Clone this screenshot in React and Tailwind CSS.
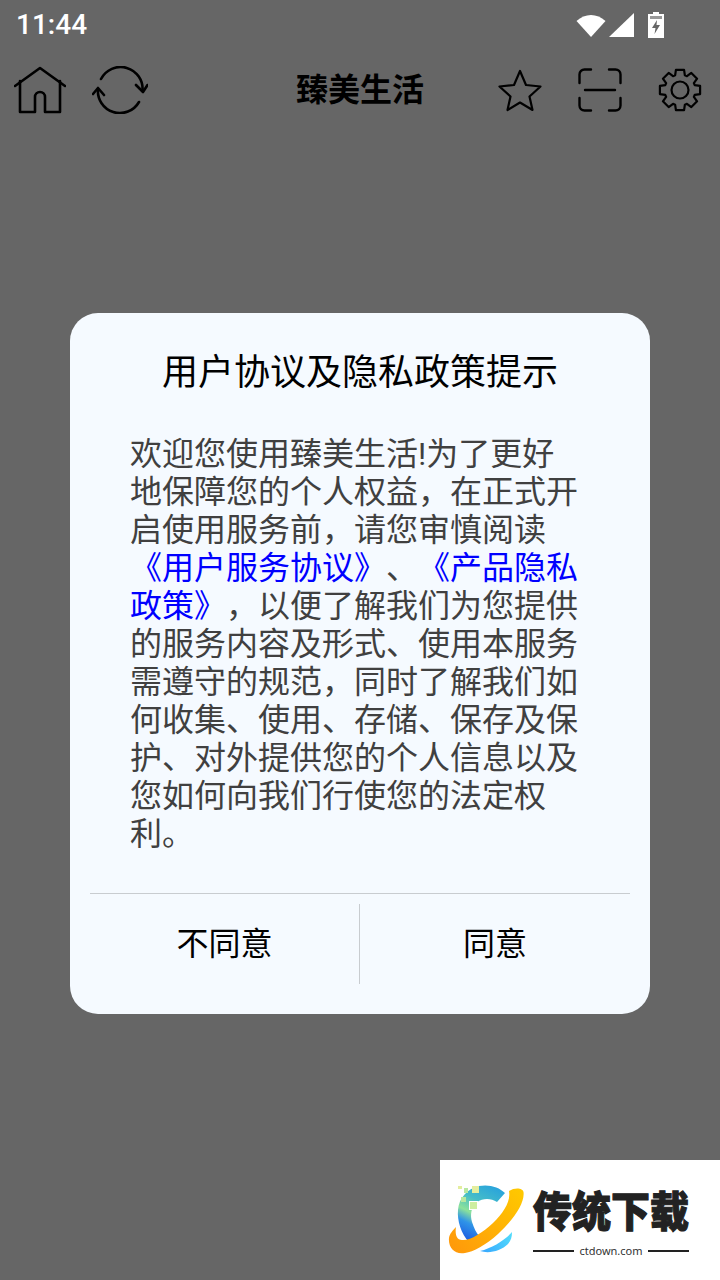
const cjk = { fontFamily: 'Roboto, "Noto Sans CJK SC", "Noto Sans", sans-serif' };

function Home() {
  return (
    <svg width="52" height="48" viewBox="0 0 52 48" fill="none" stroke="#000" strokeWidth="2.6" strokeLinecap="round" strokeLinejoin="round">
      <path d="M1 20 L26 2 L51 20" />
      <path d="M6 15 V46 H21 V31 A5 5 0 0 1 31 31 V46 H46 V15" />
    </svg>
  );
}
function Refresh() {
  return (
    <svg width="56" height="48" viewBox="0 0 56 48" fill="none" stroke="#000" strokeWidth="2.6" strokeLinecap="round" strokeLinejoin="round">
      <path d="M9 13 A22 22 0 0 1 50.500 25" />
      <path d="M44 19 L51 26 L55.500 19" />
      <path d="M47 36 A22 22 0 0 1 6 23" />
      <path d="M1 28 L6 22 L12 29" />
    </svg>
  );
}
function Star() {
  return (
    <svg width="44" height="44" viewBox="0 0 44 44" fill="none" stroke="#000" strokeWidth="2.2" strokeLinejoin="round">
      <path d="M22 3 L28 17 L42.500 18.500 L31.500 28.500 L34.500 42 L22 34.500 L9.500 42 L12.500 28.500 L1.500 18.500 L16 17 Z" />
    </svg>
  );
}
function Scan() {
  return (
    <svg width="44" height="44" viewBox="0 0 44 44" fill="none" stroke="#000" strokeWidth="2.4" strokeLinecap="round">
      <path d="M1.500 15 V6.500 A5 5 0 0 1 6.500 1.500 H13" />
      <path d="M31 1.500 H37.500 A5 5 0 0 1 42.500 6.500 V15" />
      <path d="M1.500 30 V37.500 A5 5 0 0 0 6.500 42.500 H13" />
      <path d="M31 42.500 H37.500 A5 5 0 0 0 42.500 37.500 V30" />
      <path d="M7 22 H37" />
    </svg>
  );
}

const gearPoints = [];
for (let i = 0; i < 8; i++) {
  const a = (i * Math.PI) / 4 - Math.PI / 2;
  const pt = (r, da) => `${(22 + r * Math.cos(a + da)).toFixed(2)} ${(22 + r * Math.sin(a + da)).toFixed(2)}`;
  gearPoints.push(`${pt(15.5, -0.32)} L${pt(20.5, -0.2)} L${pt(20.5, 0.2)} L${pt(15.5, 0.32)}`);
}
const gearD = 'M' + gearPoints.join(' L') + ' Z';

function Gear() {
  return (
    <svg width="44" height="44" viewBox="0 0 44 44" fill="none" stroke="#000" strokeWidth="2.2" strokeLinejoin="round">
      <circle cx="22" cy="22" r="8.500" />
      <path d={gearD} />
    </svg>
  );
}
function Logo() {
  return (
    <svg width="85" height="80" viewBox="0 0 85 80">
      <defs>
        <linearGradient id="c" x1="50" y1="6" x2="22" y2="62" gradientUnits="userSpaceOnUse">
          <stop offset="0" stopColor="#29a3dc" />
          <stop offset="0.32" stopColor="#45bdc8" />
          <stop offset="0.55" stopColor="#8ce29a" />
          <stop offset="0.72" stopColor="#2f94e8" />
          <stop offset="1" stopColor="#1c58e0" />
        </linearGradient>
        <linearGradient id="o" x1="75" y1="10" x2="10" y2="70" gradientUnits="userSpaceOnUse">
          <stop offset="0" stopColor="#ffc800" />
          <stop offset="1" stopColor="#ff9a0a" />
        </linearGradient>
        <linearGradient id="b" x1="66" y1="52" x2="36" y2="72" gradientUnits="userSpaceOnUse">
          <stop offset="0" stopColor="#52dcfb" />
          <stop offset="1" stopColor="#36a6ff" />
        </linearGradient>
      </defs>
      <path d="M34 6 C44 4 54 7 60 13 L52 22 C46 18 38 18 32 22 C26 27 25 35 27 42 C29 48 31 53 35 57 L24 62 C16 54 12 40 13 30 C14 18 22 9 34 6 Z" fill="url(#c)" />
      <path d="M64 11 C70 7 78 8 78.500 12 C80 23 69 39 53 54 C41 65 28 72 20 73 C10 75 3 68 4 58 C4.500 54 8 50 11 47 C10 53 11 60 17 60 C25 61 37 53 48 43 C58 33 66 22 64 11 Z" fill="url(#o)" />
      <path d="M35 71 C47 68 60 60 67 52 C67 57 66 60 63 64 C56 71 44 74 35 71 Z" fill="url(#b)" />
      <rect x="13" y="6" width="4" height="3" fill="#e4ee9e" />
      <rect x="19" y="8" width="4" height="5" fill="#b8e8a0" />
      <rect x="27" y="6" width="7" height="7" fill="#e4ee9e" />
      <rect x="16" y="17" width="5" height="5" fill="#b8e8a0" />
      <rect x="24" y="21" width="9" height="9" fill="#ffffff" />
      <rect x="25" y="22" width="7" height="7" fill="#cdeea0" />
    </svg>
  );
}

function Wifi() {
  return <svg width="30" height="26" viewBox="0 0 30 26"><path d="M0.500 9 C9 1 21 1 29.500 9 L15 25 Z" fill="#fff" /></svg>;
}

export default function App() {
  return (
    <div className="relative w-[720px] h-[1280px] overflow-hidden bg-[#666666]" style={cjk}>
      <div className="flex items-center justify-between h-[50px] pl-4 pr-[56px]">
        <span className="text-white text-[28px] font-medium">11:44</span>
        <div className="flex items-center">
          <Wifi />
          <svg width="25" height="26" viewBox="0 0 25 26" className="ml-[3px]"><path d="M25 1 V25 H0 Z" fill="#fff" /></svg>
          <svg width="16" height="26" viewBox="0 0 16 26" className="ml-[14px]">
            <path d="M5 0 H11 V2 H16 V26 H0 V2 H5 Z" fill="#fff" />
            <rect x="2" y="4" width="12" height="3" fill="#999" />
            <path d="M9 8 L4 16 H7.500 L6.500 22 L12 13 H8.500 Z" fill="#666" />
          </svg>
        </div>
      </div>
      <div className="flex items-center h-20">
        <div className="flex-1 flex items-center pl-[14px]">
          <Home />
          <div className="ml-[26px]"><Refresh /></div>
        </div>
        <div className="text-[32px] leading-[44px] font-bold text-black ml-1">臻美生活</div>
        <div className="flex-1 flex items-center justify-end gap-9 pr-[18px]">
          <Star />
          <Scan />
          <Gear />
        </div>
      </div>
      <div className="absolute left-[70px] top-[313px] w-[580px] h-[701px] rounded-[28px] bg-[#f5faff] px-5 flex flex-col">
        <div className="text-center text-[36px] leading-[44px] text-black mt-[38px]">用户协议及隐私政策提示</div>
        <p className="mt-10 ml-10 w-[451px] text-[32px] leading-[38px] text-[#404040] break-all [text-spacing-trim:space-all]">
          欢迎您使用臻美生活!为了更好地保障您的个人权益，在正式开启使用服务前，请您审慎阅读
          <span className="text-[#0000ff]">《用户服务协议》</span>、<span className="text-[#0000ff]">《产品隐私政策》</span>，以便了解我们为您提供的服务内容及形式、使用本服务需遵守的规范，同时了解我们如何收集、使用、存储、保存及保护、对外提供您的个人信息以及您如何向我们行使您的法定权利。
        </p>
        <div className="mt-10 h-px bg-[#c8ccd0]" />
        <div className="flex items-center pt-[10px]">
          <button className="w-[269px] h-20 text-[32px] leading-[38px] text-black">不同意</button>
          <div className="w-px h-20 bg-[#c8ccd0]" />
          <button className="flex-1 h-20 text-[32px] leading-[38px] text-black">同意</button>
        </div>
      </div>
      <div className="absolute right-0 bottom-0 w-[280px] h-[120px] bg-white flex items-start pl-[5px] pt-5">
        <Logo />
        <div className="ml-[3px] w-[156px] flex flex-col items-center pt-[10px]">
          <div className="text-[39px] leading-[46px] font-black text-[#222222] whitespace-nowrap scale-y-[1.08] [-webkit-text-stroke:1px_#222222]">传统下载</div>
          <div className="flex items-center w-full mt-[7px]">
            <div className="flex-1 h-[2px] bg-[#222222]" />
            <span className="px-[5px] text-[11px] leading-[16px] text-[#333333]" style={{ fontFamily: '"Noto Sans", sans-serif' }}>ctdown.com</span>
            <div className="flex-1 h-[2px] bg-[#222222]" />
          </div>
        </div>
      </div>
    </div>
  );
}
